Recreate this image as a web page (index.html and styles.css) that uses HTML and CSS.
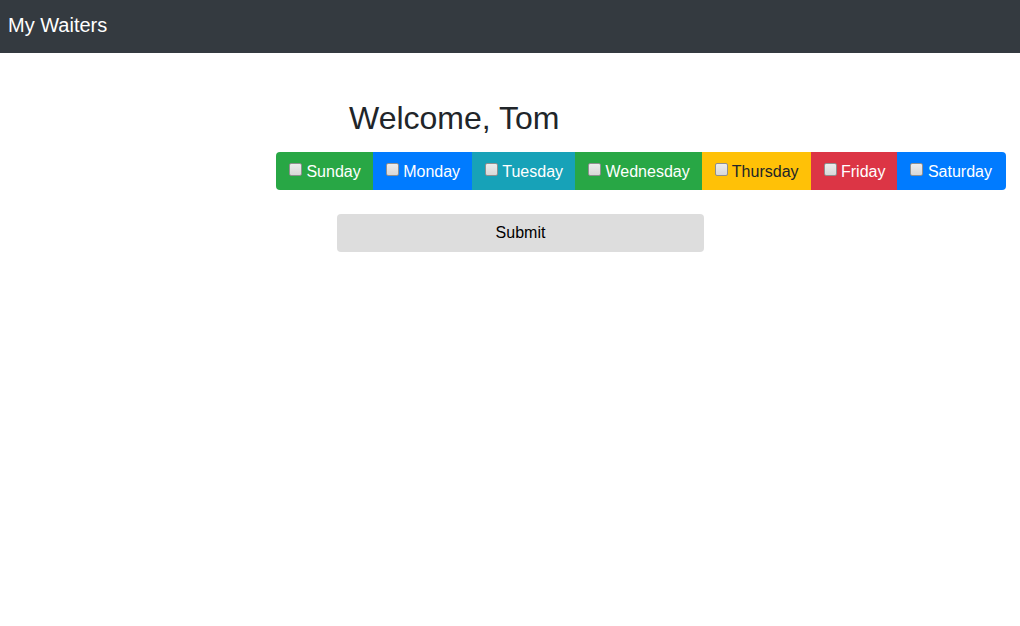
FILE: index.html
```html
<!DOCTYPE html>
<html lang="en">
<head>
<meta charset="utf-8">
<title>My Waiters</title>
<link rel="stylesheet" href="styles.css">
</head>
<body>
<nav class="navbar"><span class="brand">My Waiters</span></nav>
<main class="main">
  <h2 class="welcome">Welcome, Tom</h2>
  <form class="form">
    <div class="days">
      <label class="day green"><input type="checkbox"> Sunday</label>
      <label class="day blue"><input type="checkbox"> Monday</label>
      <label class="day teal"><input type="checkbox"> Tuesday</label>
      <label class="day green"><input type="checkbox"> Wednesday</label>
      <label class="day yellow"><input type="checkbox"> Thursday</label>
      <label class="day red"><input type="checkbox"> Friday</label>
      <label class="day blue last"><input type="checkbox"> Saturday</label>
    </div>
    <button type="button" class="submit">Submit</button>
  </form>
</main>
</body>
</html>
```
FILE: styles.css
```css
* { box-sizing: border-box; }
body {
  margin: 0;
  font-family: "Liberation Sans", Arial, sans-serif;
  font-size: 16px;
  color: #212529;
  background: #fff;
}
.navbar {
  height: 53px;
  background: #343a40;
  display: flex;
  align-items: center;
  padding: 0 8px 4px;
}
.brand {
  color: #fff;
  font-size: 20px;
  line-height: 1.5;
}
.main {
  display: flex;
  flex-direction: column;
  align-items: flex-start;
  padding-top: 46px;
}
.welcome {
  margin: 0 0 15px 349px;
  font-size: 32px;
  font-weight: 400;
  line-height: 38px;
}
.form {
  display: flex;
  flex-direction: column;
  align-items: flex-start;
}
.days {
  display: flex;
  margin-left: 276px;
  border-radius: 4px;
  overflow: hidden;
}
.day {
  display: flex;
  align-items: center;
  height: 38px;
  padding: 2px 12px 0 12px;
  color: #fff;
  font-size: 16px;
  white-space: pre;
}
.day.last { padding-right: 14px; }
.day input {
  -webkit-appearance: none;
  appearance: none;
  margin: 0 0 5px 1px;
  width: 13px;
  height: 13px;
  border: 1px solid #8f8f8f;
  border-radius: 2px;
  background: linear-gradient(#ececec, #d8d8d8);
}
.green { background: #28a745; }
.blue { background: #007bff; }
.teal { background: #17a2b8; }
.yellow { background: #ffc107; color: #212529; }
.red { background: #dc3545; }
.submit {
  margin: 24px 0 0 337px;
  width: 367px;
  height: 38px;
  border: 0;
  border-radius: 4px;
  background: #ddd;
  color: #000;
  font-family: "Liberation Sans", Arial, sans-serif;
  font-size: 16px;
}
```
